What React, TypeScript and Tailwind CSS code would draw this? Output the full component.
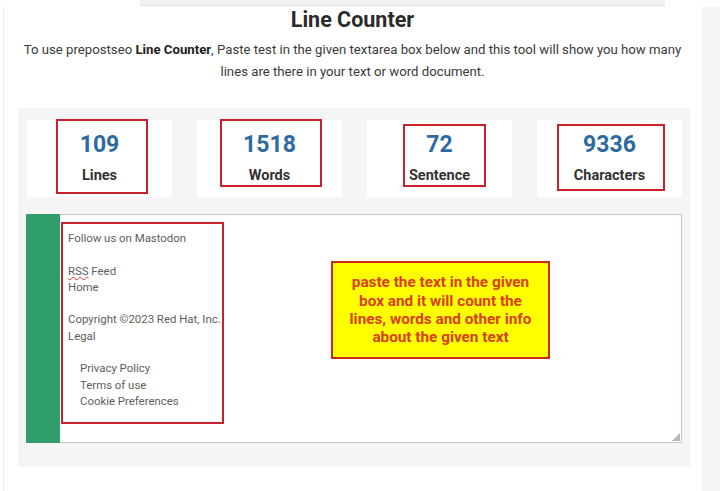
import React from 'react';

interface Stat {
  value: string;
  label: string;
  mark: string;
}

const stats: Stat[] = [
  { value: '109', label: 'Lines', mark: 'left-[29px] -top-px w-[92px] h-[75px]' },
  { value: '1518', label: 'Words', mark: 'left-[23px] -top-px w-[102px] h-[68px]' },
  { value: '72', label: 'Sentence', mark: 'left-[36px] top-[4px] w-[83px] h-[63px]' },
  { value: '9336', label: 'Characters', mark: 'left-[20px] top-[4px] w-[108px] h-[67px]' },
];

const pasted = [
  { text: 'Follow us on Mastodon' },
  { text: '' },
  { text: 'RSS Feed', rss: true },
  { text: 'Home' },
  { text: '' },
  { text: 'Copyright ©2023 Red Hat, Inc.' },
  { text: 'Legal' },
  { text: '' },
  { text: 'Privacy Policy', indent: true },
  { text: 'Terms of use', indent: true },
  { text: 'Cookie Preferences', indent: true },
];

export default function App() {
  return (
    <div className="w-[720px] h-[491px] bg-white overflow-hidden flex flex-col font-['Roboto',sans-serif]">
      {/* strip of the page above */}
      <div className="h-[7px] flex">
        <div className="ml-[140px] w-[525px] h-[6px] bg-[#f2f2f2] border-b border-[#e2e2e2]" />
      </div>

      <div className="flex flex-1">
        <div className="flex-1 ml-[3px] border-l border-[#ececec] flex flex-col items-center">
          <h1 className="mt-[0px] text-[21.5px] leading-[26px] font-bold text-[#2b2b2b]">
            Line Counter
          </h1>
          <p className="mt-[6px] w-[664px] text-center text-[13.2px] leading-[22px] text-[#3a3a3a]">
            To use prepostseo <b className="text-[#222]">Line Counter</b>, Paste test in the given textarea box below and this tool will show you how many lines are there in your text or word document.
          </p>

          <div className="mt-[25px] self-start ml-[14px] w-[672px] bg-[#f5f5f5] px-[8px] pt-[12px] pb-[24px]">
            <div className="grid grid-cols-4 gap-[25px] pl-[1px]">
              {stats.map((s) => (
                <div key={s.label} className="relative h-[77px] bg-white flex flex-col items-center pt-[12px]">
                  <div className="text-[23px] leading-[26px] font-bold text-[#2d6aa0]">{s.value}</div>
                  <div className="mt-[9px] text-[14.5px] leading-[18px] font-bold text-[#333]">{s.label}</div>
                  <div className={`absolute ${s.mark} border-2 border-[#c8232c]`} />
                </div>
              ))}
            </div>

            <div className="relative mt-[17px] h-[229px] flex border border-[#bccfc8] bg-white">
              <div className="w-[34px] -my-px -ml-px bg-[#2f9e6b]" />
              <div className="relative flex-1 pl-[8px] pt-[15px] text-[11.4px] leading-[16.3px] text-[#5e5e5e]">
                {pasted.map((l, i) => (
                  <div key={i} className={`h-[16.3px] ${l.indent ? 'pl-[12px]' : ''}`}>
                    {l.rss ? (
                      <>
                        <span className="underline decoration-wavy decoration-[#d33] decoration-1">RSS</span> Feed
                      </>
                    ) : (
                      l.text
                    )}
                  </div>
                ))}
                <div className="absolute left-[1px] top-[7px] w-[163px] h-[202px] border-2 border-[#c8232c]" />
              </div>

              <div className="absolute left-[304px] top-[46px] w-[219px] h-[98px] bg-[#ffff00] border-2 border-[#cc2a1a] flex items-center justify-center">
                <p className="text-center text-[15.3px] leading-[18.3px] font-bold text-[#d8401c]">
                  paste the text in the given
                  <br />
                  box and it will count the
                  <br />
                  lines, words and other info
                  <br />
                  about the given text
                </p>
              </div>

              <svg className="absolute right-[1px] bottom-[1px]" width="8" height="8" viewBox="0 0 8 8">
                <path d="M8 0 L8 8 L0 8 Z" fill="#b5b5b5" />
              </svg>
            </div>
          </div>
        </div>

        <div className="w-[18px] ml-[1px] bg-[#f4f5f6]" />
      </div>
    </div>
  );
}
